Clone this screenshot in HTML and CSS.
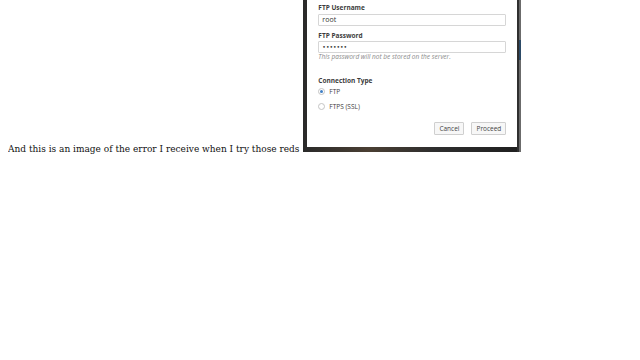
FILE: index.html
```html
<!DOCTYPE html>
<html lang="en">
<head>
    <meta charset="UTF-8" />
    <title>FTP error</title>
    <link rel="stylesheet" href="styles.css">
</head>
<body>
    <p class="post">And this is an image of the error I receive when I try those reds <span class="shot"><span class="dialog">
        <span class="field-label">FTP Username</span>
        <span class="input">root</span>
        <span class="field-label second">FTP Password</span>
        <span class="input dots">&#8226;&#8226;&#8226;&#8226;&#8226;&#8226;&#8226;</span>
        <span class="hint">This password will not be stored on the server.</span>
        <span class="field-label group">Connection Type</span>
        <span class="radio-row"><span class="radio checked"></span>FTP</span>
        <span class="radio-row last"><span class="radio"></span>FTPS (SSL)</span>
        <span class="actions">
            <span class="btn">Cancel</span>
            <span class="btn">Proceed</span>
        </span>
    </span></span></p>
</body>
</html>
```

FILE: styles.css
```css
body {
    margin: 0 8px;
    background: #fff;
    font-family: "DejaVu Serif", serif;
}

.post {
    margin: 0;
    font-size: 9px;
    color: #111;
}

.shot {
    display: inline-block;
    overflow: hidden;
    width: 218px;
    height: 152px;
    margin-left: 1px;
    box-sizing: border-box;
    padding: 0 4px 5px 4px;
    background:
        linear-gradient(to bottom, transparent 40px, #2c4a66 40px, #2c4a66 60px, transparent 60px) right / 2px 100% no-repeat,
        linear-gradient(to right, #2f2f2f 0, #2f2f2f 2px, #6b6b6b 2px) right / 4px 100% no-repeat,
        linear-gradient(to right, #2a2a2a 0, #4a3f33 30%, #2e2e2e 60%, #1f1f1f 100%);
    vertical-align: baseline;
}

.dialog {
    display: flex;
    flex-direction: column;
    height: 100%;
    box-sizing: border-box;
    background: #fff;
    padding: 4px 11px 12px 11px;
    font-family: "Open Sans", "Noto Sans", sans-serif;
    font-size: 6.5px;
    color: #3c3c3c;
}

.field-label {
    line-height: 8px;
    font-weight: bold;
    margin-bottom: 2px;
}

.field-label.second {
    margin-top: 6px;
    margin-bottom: 1px;
}

.field-label.group {
    margin-top: 16px;
    margin-bottom: 1px;
}

.input {
    height: 12px;
    box-sizing: border-box;
    border: 1px solid #d6d6d6;
    border-radius: 1px;
    padding: 0 3px;
    line-height: 10px;
    font-size: 7px;
    color: #333;
}

.input.dots {
    font-size: 6px;
    font-family: "DejaVu Sans", sans-serif;
}

.hint {
    line-height: 8px;
    font-style: italic;
    color: #8a8a8a;
}

.radio-row {
    display: flex;
    align-items: center;
    gap: 4px;
    height: 10px;
}

.radio-row.last {
    margin-top: 5px;
}

.radio {
    width: 7px;
    height: 7px;
    box-sizing: border-box;
    border: 1px solid #c4c4c4;
    border-radius: 50%;
    display: flex;
    align-items: center;
    justify-content: center;
}

.radio.checked::after {
    content: "";
    width: 3px;
    height: 3px;
    border-radius: 50%;
    background: #3f7fc4;
}

.actions {
    display: flex;
    justify-content: flex-end;
    gap: 7px;
    margin-top: auto;
}

.btn {
    height: 13px;
    box-sizing: border-box;
    border: 1px solid #cfcfcf;
    background: #f7f7f7;
    border-radius: 1px;
    padding: 0 4px;
    line-height: 11px;
    color: #444;
}
```
